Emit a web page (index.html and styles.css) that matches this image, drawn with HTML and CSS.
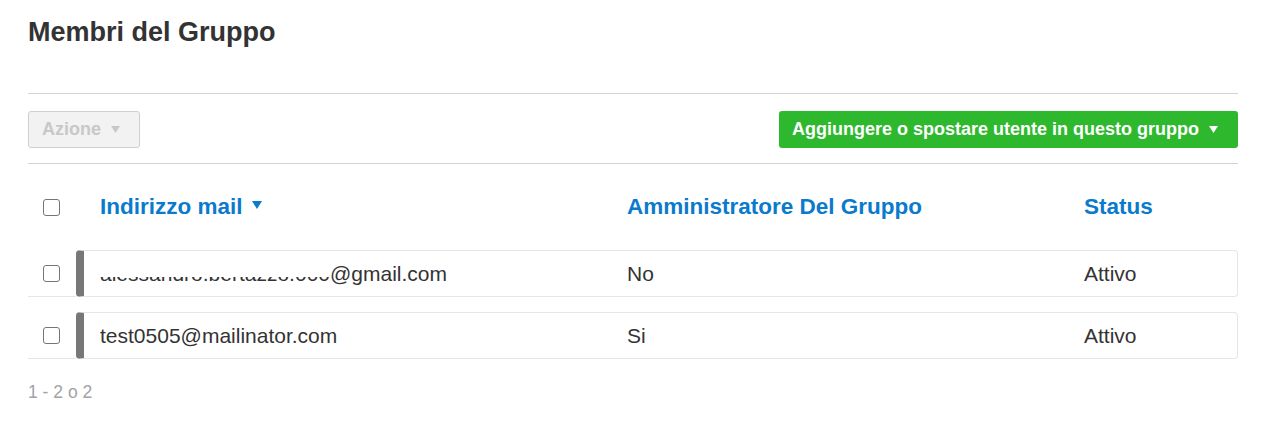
FILE: index.html
```html
<!DOCTYPE html>
<html lang="it">
<head>
<meta charset="utf-8">
<title>Membri del Gruppo</title>
<link rel="stylesheet" href="styles.css">
</head>
<body>
<div class="page">
  <h1 class="title">Membri del Gruppo</h1>
  <div class="toolbar">
    <button class="btn btn-action" disabled>Azione <svg class="caret" width="9" height="7" viewBox="0 0 9 7"><path d="M0 0H9L4.5 7Z" fill="currentColor"/></svg></button>
    <button class="btn btn-add">Aggiungere o spostare utente in questo gruppo <svg class="caret" width="9" height="7" viewBox="0 0 9 7"><path d="M0 0H9L4.5 7Z" fill="currentColor"/></svg></button>
  </div>
  <div class="head-row">
    <div class="check-cell"><span class="cbox"></span></div>
    <div class="head-cols">
      <span class="head-link">Indirizzo mail <svg class="sort" width="10" height="8" viewBox="0 0 10 8"><path d="M0 0H10L5 8Z" fill="currentColor"/></svg></span>
      <span class="head-link">Amministratore Del Gruppo</span>
      <span class="head-link">Status</span>
    </div>
  </div>
  <div class="row">
    <div class="check-cell line"><span class="cbox"></span></div>
    <div class="card">
      <span class="cell"><span class="redacted">alessandro.bertazzo.000</span>@gmail.com</span>
      <span class="cell">No</span>
      <span class="cell">Attivo</span>
    </div>
  </div>
  <div class="row">
    <div class="check-cell line"><span class="cbox"></span></div>
    <div class="card">
      <span class="cell">test0505@mailinator.com</span>
      <span class="cell">Si</span>
      <span class="cell">Attivo</span>
    </div>
  </div>
  <div class="pager">1 - 2 o 2</div>
</div>
</body>
</html>
```

FILE: styles.css
```css
* { box-sizing: border-box; }
html, body { margin: 0; padding: 0; background: #fff; }
body {
  font-family: "Liberation Sans", Arial, sans-serif;
  color: #333;
}
.page {
  padding: 16px 25px 0 28px;
}
.title {
  margin: 0;
  font-size: 27px;
  line-height: 32px;
  font-weight: bold;
  color: #333;
  height: 32px;
}
.toolbar {
  margin-top: 45px;
  border-top: 1px solid #d2d2d2;
  border-bottom: 1px solid #d2d2d2;
  padding: 17px 0 15px 0;
  display: flex;
  justify-content: space-between;
  align-items: center;
}
.btn {
  height: 37px;
  font-family: "Liberation Sans", Arial, sans-serif;
  font-size: 18px;
  font-weight: bold;
  border-radius: 3px;
  display: flex;
  align-items: center;
  padding: 0 13px;
  margin: 0;
}
.caret { margin-left: 10px; }
.btn-action {
  width: 112px;
  background: #f2f2f2;
  border: 1px solid #cfcfcf;
  color: #c8c8c8;
}
.btn-add {
  width: 459px;
  background: #2eb82e;
  border: none;
  color: #fff;
}
.head-row {
  display: flex;
  height: 86px;
  align-items: center;
}
.check-cell {
  width: 48px;
  flex: none;
  display: flex;
  align-items: center;
  padding-left: 15px;
  align-self: stretch;
}
.check-cell.line { border-bottom: 1px solid #e6e6e6; }
.cbox {
  display: block;
  width: 17px;
  height: 17px;
  border: 1px solid #767676;
  border-radius: 3px;
  background: #fff;
}
.head-row .cbox { margin-top: 1px; }
.head-cols {
  flex: 1;
  display: grid;
  grid-template-columns: 527px 457px 1fr;
  padding-left: 24px;
}
.head-link {
  font-size: 22.5px;
  font-weight: bold;
  color: #0a7acc;
  line-height: 26px;
}
.sort { margin-left: 3px; vertical-align: 5px; }
.row {
  display: flex;
  margin-bottom: 15px;
}
.card {
  flex: 1;
  height: 47px;
  border: 1px solid #e6e6e6;
  border-left: 8px solid #777;
  border-radius: 4px;
  display: grid;
  grid-template-columns: 527px 457px 1fr;
  align-items: center;
  padding-left: 16px;
}
.cell {
  font-size: 21px;
  line-height: 24px;
  color: #333;
}
.redacted {
  position: relative;
}
.redacted::after {
  content: "";
  position: absolute;
  left: 0;
  right: 0;
  top: 0;
  height: 15px;
  background: #fff;
}
.pager {
  margin-top: 23px;
  font-size: 17.5px;
  line-height: 20px;
  color: #a0a3a7;
}
```
